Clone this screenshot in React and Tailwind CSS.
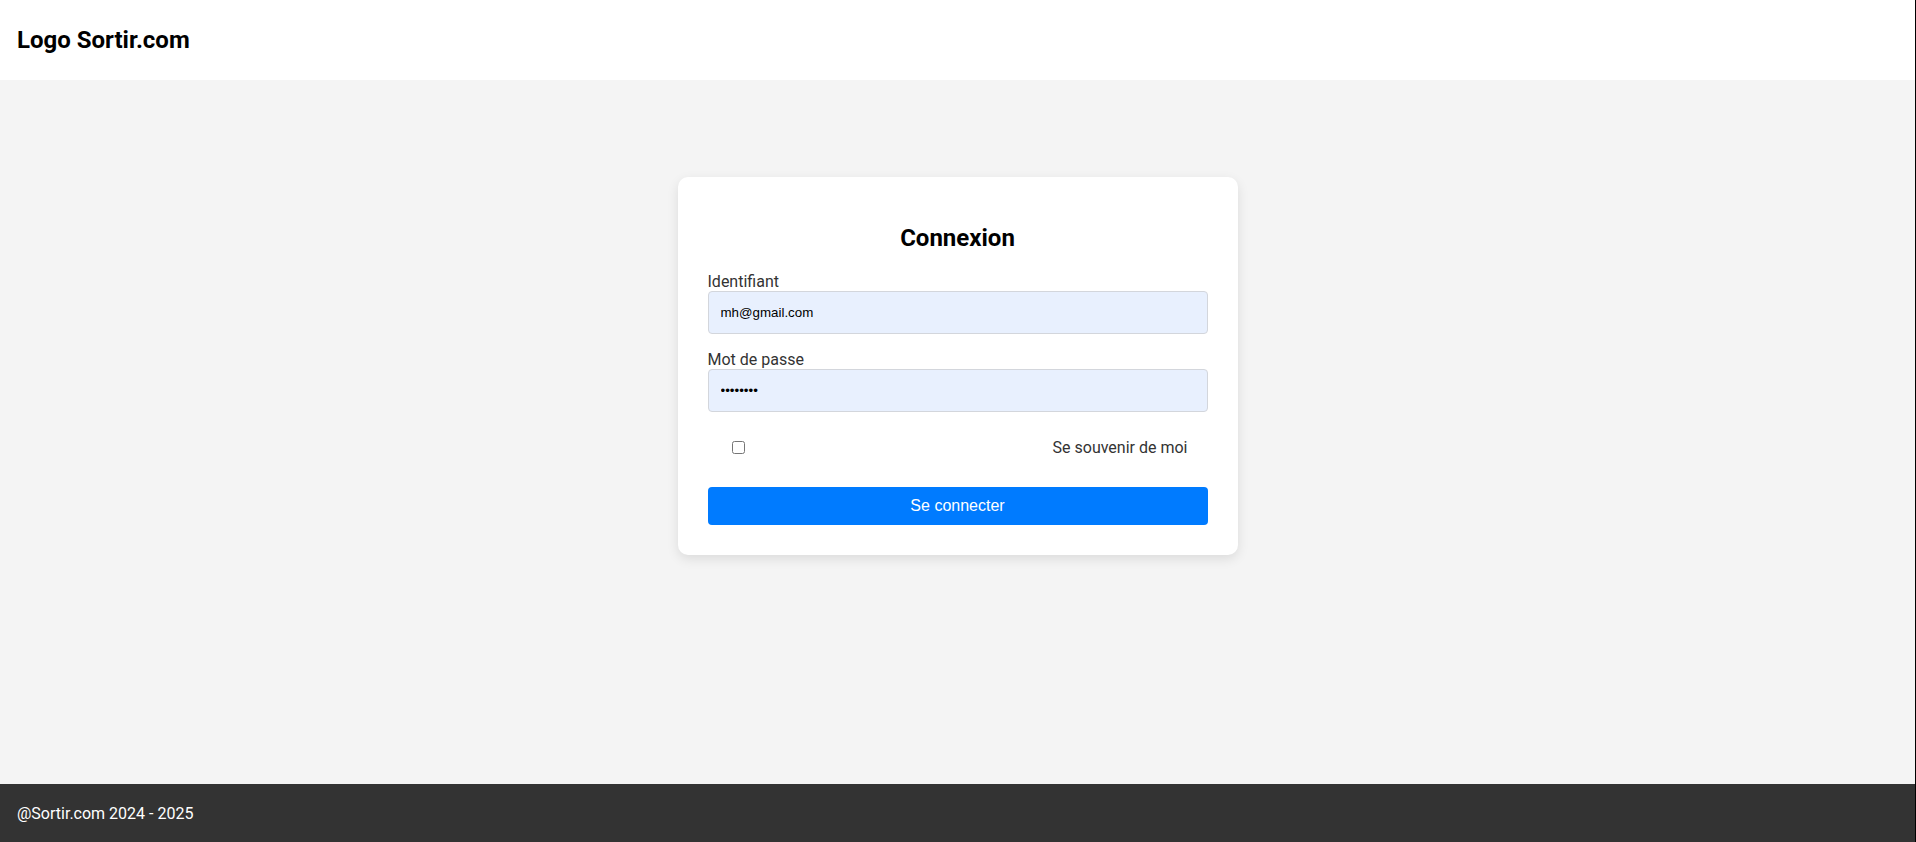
export default function App() {
  return (
    <div className="min-h-screen flex flex-col bg-[#f4f4f4] border-r border-black leading-[normal] font-['Roboto',sans-serif]">
      <header className="h-[80px] bg-white flex items-center px-[17px]">
        <h1 className="text-[24px] font-bold text-black leading-[normal]">Logo Sortir.com</h1>
      </header>

      <main className="flex-1 flex justify-center items-start">
        <div className="mt-[97px] w-[560px] bg-white rounded-[10px] shadow-[0_4px_12px_rgba(0,0,0,0.1)] px-[30px] pt-[30px] pb-[30px]">
          <h2 className="mt-[17px] mb-[20px] text-center text-[24px] font-bold text-black leading-[normal]">Connexion</h2>

          <form onSubmit={(e) => e.preventDefault()}>
            <div className="mb-[16px]">
              <label htmlFor="username" className="block text-[16px] text-[#333] leading-[normal]">Identifiant</label>
              <input
                id="username"
                type="text"
                defaultValue="mh@gmail.com"
                className="block w-full h-[43px] px-3 bg-[#e8f0fe] border border-[#d3d6dc] rounded-[4px] text-[13.33px] text-black font-['Liberation_Sans',Arial,sans-serif] outline-none"
              />
            </div>

            <div>
              <label htmlFor="password" className="block text-[16px] text-[#333] leading-[normal]">Mot de passe</label>
              <input
                id="password"
                type="password"
                defaultValue="12345678"
                className="block w-full h-[43px] px-3 bg-[#e8f0fe] border border-[#d3d6dc] rounded-[4px] text-[13.33px] text-black font-['Liberation_Sans',Arial,sans-serif] outline-none"
              />
            </div>

            <div className="mt-[26px] mb-[30px] px-[20px] flex items-center justify-between">
              <input id="remember" type="checkbox" className="ml-[4px] w-[13px] h-[13px]" />
              <label htmlFor="remember" className="text-[16px] text-[#333] leading-[normal]">Se souvenir de moi</label>
            </div>

            <button
              type="submit"
              className="block w-full h-[38px] bg-[#007bff] text-white rounded-[4px] text-[16px] font-['Liberation_Sans',Arial,sans-serif]"
            >
              Se connecter
            </button>
          </form>
        </div>
      </main>

      <footer className="h-[58px] bg-[#333] flex items-center px-[17px]">
        <p className="text-[16px] text-white leading-[normal]">@Sortir.com 2024 - 2025</p>
      </footer>
    </div>
  );
}
